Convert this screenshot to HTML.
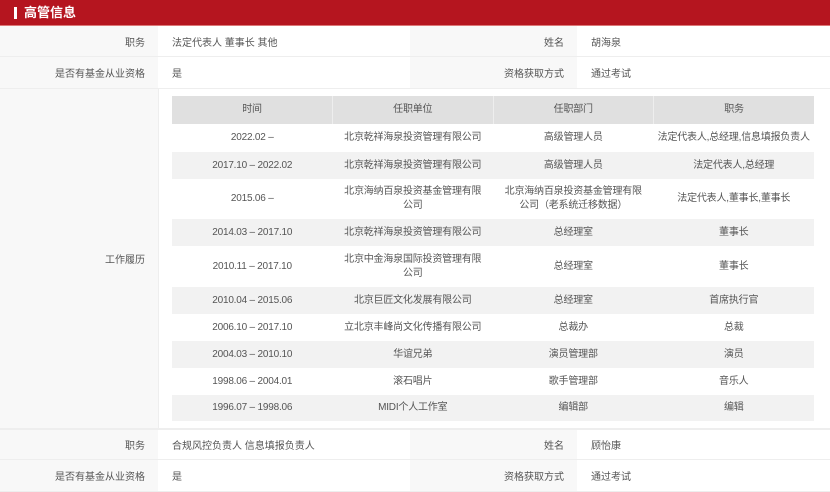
<!DOCTYPE html>
<html><head><meta charset="utf-8"><style>
*{margin:0;padding:0;box-sizing:border-box}
body{width:830px;height:482px;overflow:hidden;background:#fff;font-family:"Liberation Sans","Noto Sans CJK SC",sans-serif;font-size:10px;color:#555}
.hd{position:absolute;left:0;top:0;width:830px;height:26px;background:#b5151f;color:#fff;font-size:13px;font-weight:bold;line-height:25px;padding-left:24px;border-bottom:1px solid #d77}
.hd:before{content:"";position:absolute;left:14px;top:7px;width:3px;height:12px;background:#fff}
.c{position:absolute;display:flex;align-items:center;border-bottom:1px solid #eee}
.l{background:#f8f8f8;justify-content:flex-end;padding-right:13px}
.v{background:#fff;padding-left:14px}
table{position:absolute;left:172px;top:96px;width:642px;border-collapse:collapse;table-layout:fixed}
td,th{text-align:center;font-weight:normal;color:#555;line-height:14px;padding:0 2px;letter-spacing:-0.2px;white-space:normal}
th{background:#e0e0e0;height:28px;border-right:1px solid #eee}
tr.g td{background:#f2f2f2}
</style></head><body>
<div class="hd">高管信息</div>
<div class="c l" style="left:0;top:26px;width:158px;height:31px">职务</div>
<div class="c v" style="left:158px;top:26px;width:252px;height:31px">法定代表人 董事长 其他</div>
<div class="c l" style="left:410px;top:26px;width:167px;height:31px">姓名</div>
<div class="c v" style="left:577px;top:26px;width:253px;height:31px">胡海泉</div>
<div class="c l" style="left:0;top:57px;width:158px;height:32px">是否有基金从业资格</div>
<div class="c v" style="left:158px;top:57px;width:252px;height:32px">是</div>
<div class="c l" style="left:410px;top:57px;width:167px;height:32px">资格获取方式</div>
<div class="c v" style="left:577px;top:57px;width:253px;height:32px">通过考试</div>
<div class="c l" style="left:0;top:89px;width:158px;height:340px;justify-content:flex-end">工作履历</div>
<div class="c" style="left:158px;top:89px;width:672px;height:340px;border-left:1px solid #eee"></div>
<table>
<tr><th>时间</th><th>任职单位</th><th>任职部门</th><th style="border:0">职务</th></tr>
<tr style="height:28px"><td>2022.02 –</td><td>北京乾祥海泉投资管理有限公司</td><td>高级管理人员</td><td style="white-space:nowrap">法定代表人,总经理,信息填报负责人</td></tr>
<tr class="g" style="height:27px"><td>2017.10 – 2022.02</td><td>北京乾祥海泉投资管理有限公司</td><td>高级管理人员</td><td>法定代表人,总经理</td></tr>
<tr style="height:40px"><td>2015.06 –</td><td style="padding:0 8px">北京海纳百泉投资基金管理有限公司</td><td style="padding:0 8px">北京海纳百泉投资基金管理有限公司（老系统迁移数据）</td><td>法定代表人,董事长,董事长</td></tr>
<tr class="g" style="height:27px"><td>2014.03 – 2017.10</td><td>北京乾祥海泉投资管理有限公司</td><td>总经理室</td><td>董事长</td></tr>
<tr style="height:41px"><td>2010.11 – 2017.10</td><td style="padding:0 8px">北京中金海泉国际投资管理有限公司</td><td>总经理室</td><td>董事长</td></tr>
<tr class="g" style="height:27px"><td>2010.04 – 2015.06</td><td>北京巨匠文化发展有限公司</td><td>总经理室</td><td>首席执行官</td></tr>
<tr style="height:27px"><td>2006.10 – 2017.10</td><td>立北京丰峰尚文化传播有限公司</td><td>总裁办</td><td>总裁</td></tr>
<tr class="g" style="height:27px"><td>2004.03 – 2010.10</td><td>华谊兄弟</td><td>演员管理部</td><td>演员</td></tr>
<tr style="height:27px"><td>1998.06 – 2004.01</td><td>滚石唱片</td><td>歌手管理部</td><td>音乐人</td></tr>
<tr class="g" style="height:26px"><td>1996.07 – 1998.06</td><td>MIDI个人工作室</td><td>编辑部</td><td>编辑</td></tr>
</table>
<div class="c l" style="left:0;top:429px;width:158px;height:31px;border-top:1px solid #eee">职务</div>
<div class="c v" style="left:158px;top:429px;width:252px;height:31px;border-top:1px solid #eee">合规风控负责人 信息填报负责人</div>
<div class="c l" style="left:410px;top:429px;width:167px;height:31px;border-top:1px solid #eee">姓名</div>
<div class="c v" style="left:577px;top:429px;width:253px;height:31px;border-top:1px solid #eee">顾怡康</div>
<div class="c l" style="left:0;top:460px;width:158px;height:32px">是否有基金从业资格</div>
<div class="c v" style="left:158px;top:460px;width:252px;height:32px">是</div>
<div class="c l" style="left:410px;top:460px;width:167px;height:32px">资格获取方式</div>
<div class="c v" style="left:577px;top:460px;width:253px;height:32px">通过考试</div>
</body></html>
